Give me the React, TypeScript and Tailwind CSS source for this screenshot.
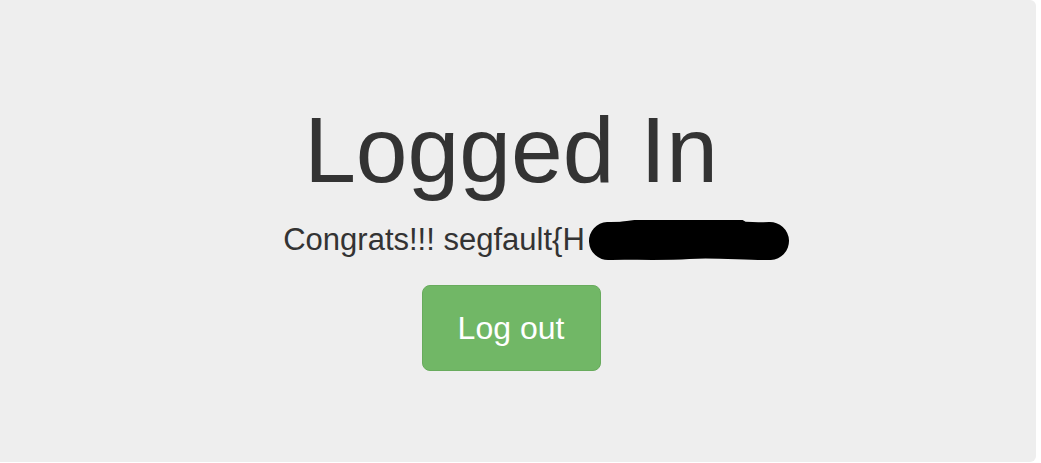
export default function App() {
  return (
    <div className="bg-white w-[1041px] h-[463px] overflow-hidden font-['Liberation_Sans',Arial,sans-serif] text-[#333333]">
      <div className="w-[1036px] h-[462px] bg-[#eeeeee] rounded-r-md">
        <div className="flex flex-col items-center w-[1022px] pt-[104px]">
          <h1 className="text-[93px] leading-none font-normal">Logged In</h1>

          <p className="mt-[27px] text-[31px] leading-none whitespace-nowrap">
            Congrats!!! segfault{"{"}H
            <span className="relative inline-block w-[154px] h-[31px] align-top">
              {/* redaction scribble */}
              <svg
                className="absolute left-[3px] top-[-4px]"
                width="202"
                height="42"
                viewBox="0 0 202 42"
              >
                <path
                  d="M20 21 C40 20 70 22 100 20 C130 18 160 22 182 21"
                  fill="none"
                  stroke="#000"
                  strokeWidth="38"
                  strokeLinecap="round"
                />
                <path
                  d="M26 14 C60 8 110 6 150 10"
                  fill="none"
                  stroke="#000"
                  strokeWidth="22"
                  strokeLinecap="round"
                />
              </svg>
            </span>
          </p>

          <button
            type="button"
            className="mt-[30px] w-[179px] h-[86px] rounded-lg bg-[#71b766] border border-[#68ab5d] text-white text-[32px] leading-none"
          >
            Log out
          </button>
        </div>
      </div>
    </div>
  );
}
